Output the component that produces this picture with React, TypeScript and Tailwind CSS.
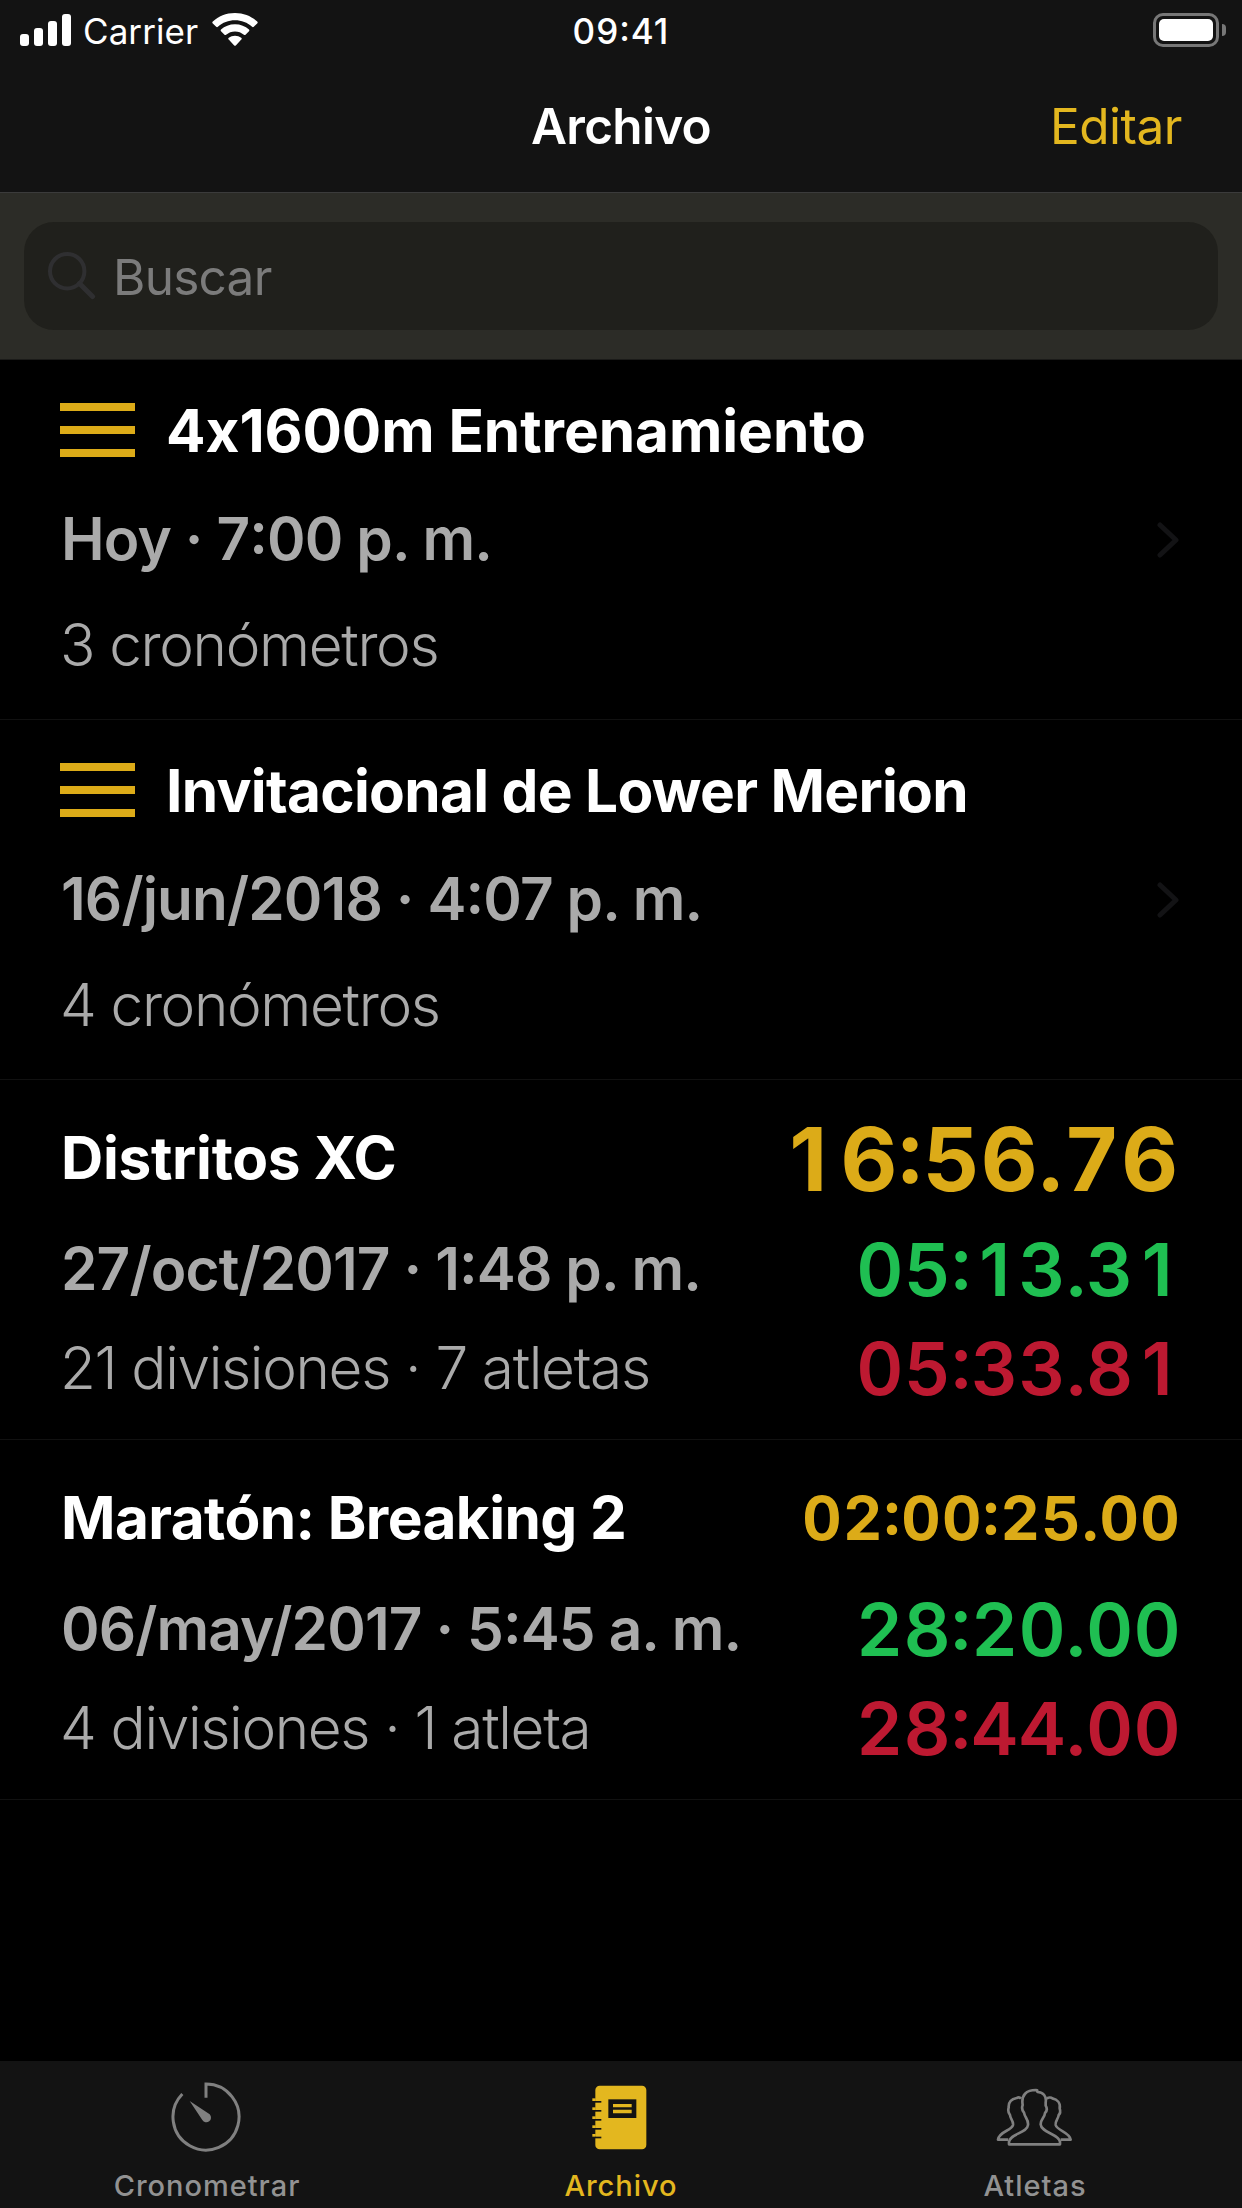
import clsx from 'clsx'

interface Entry {
  title: string
  tracking: string
  date: string
  detail: string
  group?: boolean
  total?: string
  best?: string
  worst?: string
}

const entries: Entry[] = [
  {
    title: '4x1600m Entrenamiento',
    tracking: 'tracking-[-0.001em]',
    date: 'Hoy · 7:00 p. m.',
    detail: '3 cronómetros',
    group: true,
  },
  {
    title: 'Invitacional de Lower Merion',
    tracking: 'tracking-[-0.012em]',
    date: '16/jun/2018 · 4:07 p. m.',
    detail: '4 cronómetros',
    group: true,
  },
  {
    title: 'Distritos XC',
    tracking: 'tracking-[-0.005em]',
    date: '27/oct/2017 · 1:48 p. m.',
    detail: '21 divisiones · 7 atletas',
    total: '16:56.76',
    best: '05:13.31',
    worst: '05:33.81',
  },
  {
    title: 'Maratón: Breaking 2',
    tracking: 'tracking-[-0.01em]',
    date: '06/may/2017 · 5:45 a. m.',
    detail: '4 divisiones · 1 atleta',
    total: '02:00:25.00',
    best: '28:20.00',
    worst: '28:44.00',
  },
]

const titleClass = "text-[58.5px] font-bold text-white [font-feature-settings:'calt'_0]"
const dateClass = 'text-[58.5px] font-semibold text-[#aaaaaa] tracking-[-0.015em]'
const detailClass = 'text-[58.5px] font-light text-[#aaaaaa] tracking-[-0.023em]'
const colonClass = "[font-feature-settings:'case'_1]"

// Colons between digits are raised to the middle of the figures
function Clock({ value, className }: { value: string; className?: string }) {
  return (
    <span className={className}>
      {value.split(/(:)/).map((part, i) =>
        part === ':' ? (
          <span key={i} className={colonClass}>
            :
          </span>
        ) : (
          part
        )
      )}
    </span>
  )
}

// Tabular digits, but with the plain "1" (the font's tabular one has a foot)
function Time({ value, className, wide }: { value: string; className?: string; wide?: boolean }) {
  return (
    <span className={clsx('tabular-nums', className)}>
      {value.split(/([1:])/).map((part, i) => {
        if (part === '1') {
          return (
            <span
              key={i}
              className={clsx('inline-block text-center normal-nums', wide ? 'w-[0.69em] pr-[0.03em]' : 'w-[0.65em]')}
            >
              1
            </span>
          )
        }
        if (part === ':') {
          return (
            <span key={i} className={colonClass}>
              :
            </span>
          )
        }
        return part
      })}
    </span>
  )
}

function StatusBar() {
  return (
    <div className="relative flex h-[62px] items-center justify-center">
      <div className="absolute top-0 left-5 flex h-[62px] items-center">
        <div className="mb-[2px] flex h-8 items-end gap-[5px]">
          <span className="h-3 w-[9px] rounded-[3px] bg-white" />
          <span className="h-[18px] w-[9px] rounded-[3px] bg-white" />
          <span className="h-[25px] w-[9px] rounded-[3px] bg-white" />
          <span className="h-8 w-[9px] rounded-[3px] bg-white" />
        </div>
        <span className="ml-[12px] text-[35px] tracking-[0.002em]">Carrier</span>
        <svg className="mb-[3px] ml-[14px] h-[33px] w-[46px]" viewBox="0 0 46 33" fill="#fff">
          <path d="M23 0C32 0 39.5 3.3 45.2 8.6a1.2 1.2 0 0 1 0 1.8l-3.4 3.4a1.2 1.2 0 0 1-1.7 0C35.400 9.500 29.500 7.200 23 7.200S10.600 9.500 5.900 13.800a1.200 1.200 0 0 1-1.700 0L.8 10.400a1.200 1.200 0 0 1 0-1.800C6.500 3.300 14 0 23 0Z" />
          <path d="M23 11.200c5.500 0 10.300 2 14 5.300a1.200 1.200 0 0 1 0 1.700l-3.500 3.500a1.200 1.200 0 0 1-1.600 0c-2.500-2.100-5.500-3.300-8.900-3.300s-6.400 1.200-8.900 3.300a1.200 1.200 0 0 1-1.600 0L9 18.200a1.200 1.200 0 0 1 0-1.700c3.700-3.300 8.500-5.300 14-5.300Z" />
          <path d="M23 22.800c2.400 0 4.500.8 6.200 2a1.100 1.100 0 0 1 .1 1.700l-5.500 5.900a1.100 1.100 0 0 1-1.600 0l-5.500-5.900a1.100 1.100 0 0 1 .1-1.700c1.700-1.200 3.800-2 6.200-2Z" />
        </svg>
      </div>
      <Clock value="09:41" className="text-[35px] font-medium tracking-[0.028em]" />
      <div className="absolute top-[13px] right-4 flex items-center gap-[3px]">
        <div className="h-[34px] w-[66px] rounded-[10px] border-[3px] border-[#777777] p-[3px]">
          <div className="h-full rounded-[5px] bg-white" />
        </div>
        <div className="h-3 w-1 rounded-r-full bg-[#777777]" />
      </div>
    </div>
  )
}

function SearchBar() {
  return (
    <div className="h-[168px] border-t border-b border-t-[#3b3b3b] border-b-[#1b1b19] bg-[#2c2c27] px-6 pt-[29px]">
      <div className="flex h-[108px] items-center rounded-[30px] bg-[#20201c] pl-6">
        <svg className="h-12 w-12" viewBox="0 0 48 48" fill="none" stroke="#2f2f31" strokeWidth="4" strokeLinecap="round">
          <circle cx="19.200" cy="19.200" r="17.200" />
          <path d="M31.500 31.500 44.500 44.500" strokeWidth="5" />
        </svg>
        <span className="ml-[17px] pt-[4px] text-[49.5px] tracking-[-0.015em] text-[#7b7b7b]">Buscar</span>
      </div>
    </div>
  )
}

function EntryRow({ entry }: { entry: Entry }) {
  if (entry.group) {
    return (
      <div className="flex h-[360px] items-center justify-between border-b border-[#111111] pr-[63px] pl-[60px]">
        <div className="h-full pt-[17px] whitespace-nowrap">
          <div className="flex h-[108px] items-center">
            <div className="mb-[2px] flex w-[75px] flex-col gap-[15px]">
              <span className="h-[8px] bg-[#dcab18]" />
              <span className="h-[8px] bg-[#dcab18]" />
              <span className="h-[8px] bg-[#dcab18]" />
            </div>
            <span className={clsx('ml-[31px]', titleClass, entry.tracking)}>{entry.title}</span>
          </div>
          <div className="flex h-[108px] items-center pl-px">
            <Clock value={entry.date} className={dateClass} />
          </div>
          <div className={clsx('flex h-[105px] items-center', detailClass)}>{entry.detail}</div>
        </div>
        <svg className="h-9 w-[22px]" viewBox="0 0 22 36" fill="none" stroke="#131315" strokeWidth="5" strokeLinecap="round" strokeLinejoin="round">
          <path d="M3 3 19 18 3 33" />
        </svg>
      </div>
    )
  }

  const total = entry.total ?? ''
  const long = total.length > 8
  return (
    <div className="h-[360px] border-b border-[#111111] pt-[23px] pr-[61px] pl-[60px] whitespace-nowrap">
      <div className="flex h-[111px] items-center justify-between">
        <span className={clsx('ml-px', titleClass, entry.tracking)}>{entry.title}</span>
        <Time
          value={total}
          wide={!long}
          className={clsx(
            'font-bold text-[#dcab18]',
            long ? 'text-[61px] tracking-[0.021em]' : 'pr-[2px] text-[88px] tracking-[0.011em]'
          )}
        />
      </div>
      <div className="flex h-[110px] items-center justify-between">
        <Clock value={entry.date} className={clsx('ml-px', dateClass)} />
        <Time value={entry.best ?? ''} className="text-[73px] font-semibold tracking-[0.004em] text-[#1fbf52]" />
      </div>
      <div className="flex h-[88px] items-center justify-between">
        <span className={detailClass}>{entry.detail}</span>
        <Time value={entry.worst ?? ''} className="text-[73px] font-semibold tracking-[0.004em] text-[#bd1931]" />
      </div>
    </div>
  )
}

function TimerIcon() {
  return (
    <svg className="mr-[2px] h-[70px] w-[70px]" viewBox="275 97 210 210" fill="none" stroke="#808080" strokeWidth="9">
      <path d="M380 144V103A99 99 0 1 1 309 133" />
      <path d="M331 154 391 194A14 14 0 1 1 369 211Z" fill="#808080" stroke="none" />
    </svg>
  )
}

function NotebookIcon() {
  const rings = [145, 172, 199, 226, 252]
  return (
    <svg className="mr-[4px] h-[65px] w-[55px]" viewBox="215 105 165 195">
      <rect x="225" y="107" width="153" height="191" rx="13" fill="#e3b71f" />
      {rings.map((y) => (
        <g key={y}>
          <path d={`M216 ${y}H226V${y + 8}H216Z`} fill="#e3b71f" />
          <path d={`M224 ${y + 8}H243V${y + 13}H224Z`} fill="#131313" />
        </g>
      ))}
      <path d="M264 148H348V204H264Z" fill="#131313" />
      <path d="M278 167H334M278 184.500H334" stroke="#e3b71f" strokeWidth="10" />
    </svg>
  )
}

function PeopleIcon() {
  return (
    <svg className="mr-[2px] h-[60px] w-[77px]" viewBox="168 108 231 180" fill="none" stroke="#808080" strokeWidth="8" strokeLinejoin="round">
      <path d="M243 143C240 139 234 139 230 141C214 144 205 155 206 170C203 180 206 187 210 192C211 205 221 209 219 222C215 240 178 240 174 266H205" />
      <path d="M320 144C324 139 333 138 337 142C352 145 362 156 359 172C362 181 360 188 356 192C355 204 345 209 347 222C352 240 388 242 392 266H362" />
      <path d="M207 280V272C211 248 262 246 264 222C266 204 254 200 252 185C246 178 245 170 248 162C243 132 259 117 288 117C295 117 289 120 293 123C310 124 320 136 317 154V164C322 172 320 181 315 186C314 201 302 204 302 220C304 246 356 248 360 272V280Z" />
    </svg>
  )
}

function TabBar() {
  const tabs = [
    { label: 'Cronometrar', icon: <TimerIcon /> },
    { label: 'Archivo', icon: <NotebookIcon />, active: true },
    { label: 'Atletas', icon: <PeopleIcon /> },
  ]
  return (
    <nav className="grid h-[147px] grid-cols-3 bg-[#131313]">
      {tabs.map((tab) => (
        <div key={tab.label} className="flex flex-col items-center pt-[21px]">
          <div className="flex h-[70px] items-center">{tab.icon}</div>
          <span
            className={clsx(
              'mt-[14px] text-[29px] leading-[40px] font-medium tracking-[0.034em]',
              tab.active ? 'text-[#e3b71f]' : 'text-[#929292]'
            )}
          >
            {tab.label}
          </span>
        </div>
      ))}
    </nav>
  )
}

export default function App() {
  return (
    <div className="flex h-[2208px] w-[1242px] flex-col overflow-hidden bg-black font-['Inter',sans-serif] leading-none text-white">
      <header className="h-[192px] bg-[#131313]">
        <StatusBar />
        <div className="relative flex h-[130px] items-center justify-center">
          <h1 className="text-[49.5px] font-semibold tracking-[-0.014em]">Archivo</h1>
          <button className="absolute top-0 right-[60px] h-[130px] text-[49.5px] tracking-[-0.01em] text-[#e3b71f]">
            Editar
          </button>
        </div>
      </header>
      <SearchBar />
      <main className="flex-1">
        {entries.map((entry) => (
          <EntryRow key={entry.title} entry={entry} />
        ))}
      </main>
      <TabBar />
    </div>
  )
}
